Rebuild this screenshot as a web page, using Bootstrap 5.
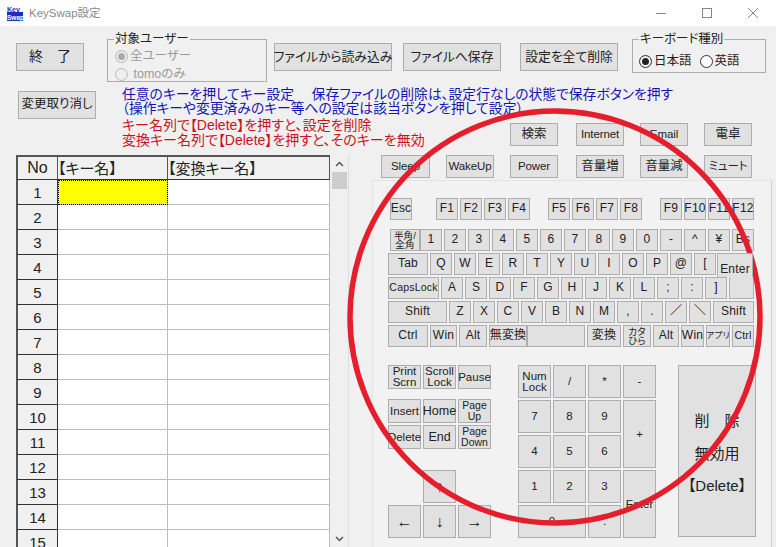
<!DOCTYPE html>
<html lang="ja">
<head>
  <meta charset="UTF-8">
  <title>KeySwap設定</title>
  <link href="https://cdn.jsdelivr.net/npm/bootstrap@5.3.3/dist/css/bootstrap.min.css" rel="stylesheet">
  <style>
    html, body { width: 776px; height: 547px; overflow: hidden; }
    body {
      position: relative;
      background: #f0f0f0;
      color: #222;
      font-family: "Liberation Sans", "Noto Sans CJK JP", sans-serif;
      font-feature-settings: "palt";
      font-size: 13px;
      line-height: 1.1;
    }
    .titlebar { height: 26px; background: #fff; color: #8a8a8a; font-size: 11.5px; }
    .appicon { width: 16px; height: 16px; margin: 0 6px 0 7px; }
    .winbtn { width: 46px; }

    .topbar { height: 60px; padding-top: 17px; }
    .wbtn {
      display: flex; align-items: center; justify-content: center; flex: none;
      padding: 0; border: 1px solid #adadad; border-radius: 0;
      background: #e1e1e1; color: #222; line-height: 1.1; text-align: center;
      font-size: 12.8px; white-space: nowrap; font-feature-settings: "palt";
    }
    .wbtn:hover { background: #e1e1e1; border-color: #adadad; color: #222; }
    .fbtn { height: 28px; }
    .btn-quit { width: 68px; margin-left: 16px; font-size: 14px; }
    .btn-load { width: 118px; margin-left: 7px; }
    .btn-save { width: 98px; margin-left: 11px; }
    .btn-clear { width: 98px; margin-left: 19px; }
    .btn-undo { width: 78px; height: 28px; margin: 5px 0 0 18px; font-size: 12.5px; }

    .groupbox { position: relative; flex: none; border: 1px solid #adadad; font-size: 12.5px; margin-top: -4px; }
    .group-user { width: 160px; height: 43px; margin-left: 23px; padding: 7px 0 0 7px; }
    .group-kb { width: 134px; height: 34px; margin-left: 14px; padding: 12px 0 0 6px; }
    .grouptitle {
      position: absolute; left: 6px; top: -8px; padding: 0 1px;
      background: #f0f0f0; line-height: 15px;
    }
    .radio-line { display: flex; align-items: center; gap: 2px; line-height: 18px; }
    .radio-line .form-check-input {
      width: 13px; height: 13px; margin: 0; flex: none; border-color: #333;
      background-color: #fff; background-image: none; opacity: 1;
    }
    .radio-line .form-check-input:checked {
      background-color: #fff; border-color: #333;
      box-shadow: inset 0 0 0 2px #fff, inset 0 0 0 7px #222;
    }
    .radio-line .form-check-input:disabled { border-color: #bbb; background-color: #eee; }
    .radio-line .form-check-input:disabled:checked { box-shadow: inset 0 0 0 2px #eee, inset 0 0 0 7px #aaa; }
    .dim { color: #9a9a9a; }

    .noticerow { height: 32px; }
    .notice { margin: 2px 0 0 26px; font-size: 13.8px; line-height: 14px; white-space: nowrap; color: #1414b4; }
    .warn { font-size: 14px; line-height: 15px; white-space: nowrap; color: #c8141e; }

    .leftpane { width: 372px; flex: none; }
    .rightpane { width: 404px; flex: none; padding-top: 5px; }
    .warnblock { height: 37px; padding: 0 0 0 122px; }

    .gridwrap { margin-left: 16px; }
    .keygrid { border-collapse: separate; border-spacing: 0; table-layout: fixed; width: 314px; }
    .keygrid th, .keygrid td { height: 25px; padding: 0; font-weight: 400; font-size: 15px; line-height: 1; }
    .keygrid thead th { background: #f0f0f0; border-top: 2px solid #555; border-right: 1px solid #555; border-bottom: 1px solid #333; text-align: left; }
    .keygrid thead th:first-child { border-left: 2px solid #555; text-align: center; padding: 0; font-size: 16px; }
    .keygrid tbody th { background: #f0f0f0; text-align: center; border-left: 2px solid #555; border-right: 1px solid #333; border-bottom: 1px solid #333; }
    .keygrid tbody td { background: #fff; border-right: 1px solid #bdbdbd; border-bottom: 1px solid #bdbdbd; }
    .keygrid tbody td.activecell { background: #ff0; outline: 1px dotted #000; outline-offset: -1px; }
    .colno { width: 42px; }
    .colkey { width: 110px; }
    .gridscroll { width: 18px; margin-left: 1px; height: 392px; position: relative; background: #f0f0f0; border-right: 1px solid #ddd; }
    .scrollthumb { height: 17px; width: 15px; margin: 0 1px; background: #cdcdcd; }
    .scrollarrow { height: 17px; display: flex; align-items: center; justify-content: center; }

    .toprow { height: 23px; gap: 16px; margin-bottom: 9px; padding-left: 138px; }
    .toprow.second { padding-left: 9px; margin-bottom: 2px; }
    .tkey { width: 48px; height: 23px; font-size: 11.5px; letter-spacing: -.1px; }
    .tkey.sleepkey { width: 49px; }
    .tkey.shifted { margin-left: 2px; }
    .kanji { font-size: 12.5px; letter-spacing: 0; }

    .kbpanel { width: 400px; height: 367px; background: #f2f2f2; border-top: 1px solid #e4e4e4; border-left: 1px solid #e4e4e4; border-right: 1px solid #cfcfcf; padding: 17px 0 0 15px; }
    .kbrow { display: flex; gap: 2px; height: 22px; margin-bottom: 2px; }
    .kbrow.fnrow { margin: 0 0 9px 2px; }
    .kbrow.numrow { margin-left: 2px; }
    .kkey { width: 22px; height: 22px; font-size: 12px; letter-spacing: .2px; }
    .small-print { font-size: 9.5px; line-height: 9.5px; }
    .mini { font-size: 8.5px; }
    .tiny { font-size: 10.5px; }
    .gap-fn { margin-left: 22px; }
    .gap-fn2 { margin-left: 16px; }
    .w23 { width: 23px; } .w24 { width: 24px; } .w25 { width: 25px; } .w26 { width: 26px; } .w27 { width: 27px; } .w28 { width: 28px; }
    .w30 { width: 30px; } .w34 { width: 34px; } .w36 { width: 36px; } .w38 { width: 38px; } .w40 { width: 40px; } .w41 { width: 41px; }
    .w51 { width: 51px; } .w58 { width: 58px; } .w59 { width: 59px; }
    .tuck { margin-right: -2px; }
    .enter-top { height: 24px; margin-left: -1px; border-bottom-color: transparent; align-items: flex-end; position: relative; z-index: 1; }
    .enter-bottom { border-top-color: transparent; }

    .lowerblock { padding-top: 16px; gap: 27px; }
    .navgrid { display: grid; grid-template-columns: repeat(3, 33px); grid-auto-rows: 24px; gap: 2px; }
    .navgrid.second { margin-top: 10px; }
    .navgrid.arrows { margin-top: 21px; grid-auto-rows: 33px; }
    .upkey { grid-column: 2; }
    .leftkey { grid-column: 1; }
    .npad { display: grid; grid-template-columns: repeat(4, 33px); grid-auto-rows: 33px; gap: 2px; }
    .npad .wbtn, .navgrid .wbtn { font-size: 11.5px; line-height: 11px; }
    .navgrid .wbtn.keylabel { font-size: 12.5px; }
    .navgrid .wbtn.pagekey { font-size: 10.5px; }
    .navgrid.arrows .wbtn { font-size: 16px; }
    .sp2r { grid-row: span 2; }
    .sp2c { grid-column: span 2; }
    .bigkey { width: 78px; height: 172px; margin-left: -5px; padding-top: 6px; flex-direction: column; font-size: 15px; gap: 16px; }
    .ringoverlay { position: absolute; inset: 0; width: 776px; height: 547px; pointer-events: none; }
  </style>
</head>
<body>

  <div class="titlebar d-flex align-items-center">
    <svg class="appicon" viewBox="0 0 16 16">
      <rect width="16" height="16" fill="#fff"/>
      <rect y="7" width="16" height="9" fill="#1a2fc0"/>
      <text x="0" y="7" font-size="7" fill="#1a2fc0" font-family="Liberation Sans" font-weight="700">Key</text>
      <text x="0" y="15" font-size="6.5" fill="#fff" font-family="Liberation Sans" font-weight="700">Swap</text>
    </svg>
    <span>KeySwap設定</span>
    <div class="ms-auto d-flex">
      <div class="winbtn d-flex justify-content-center">
        <svg width="10" height="10" viewBox="0 0 10 10"><path d="M0 5.5H10" stroke="#888"/></svg>
      </div>
      <div class="winbtn d-flex justify-content-center">
        <svg width="10" height="10" viewBox="0 0 10 10"><rect x=".5" y=".5" width="9" height="9" fill="none" stroke="#888"/></svg>
      </div>
      <div class="winbtn d-flex justify-content-center">
        <svg width="10" height="10" viewBox="0 0 10 10"><path d="M0 0L10 10M10 0L0 10" stroke="#888"/></svg>
      </div>
    </div>
  </div>

  <div class="topbar d-flex align-items-start">
    <button class="btn wbtn fbtn btn-quit">終　了</button>
    <div class="groupbox group-user">
      <span class="grouptitle">対象ユーザー</span>
      <label class="radio-line dim"><input class="form-check-input" type="radio" checked disabled>全ユーザー</label>
      <label class="radio-line dim"><input class="form-check-input" type="radio" disabled>&nbsp;tomoのみ</label>
    </div>
    <button class="btn wbtn fbtn btn-load">ファイルから読み込み</button>
    <button class="btn wbtn fbtn btn-save">ファイルへ保存</button>
    <button class="btn wbtn fbtn btn-clear">設定を全て削除</button>
    <div class="groupbox group-kb">
      <span class="grouptitle">キーボード種別</span>
      <div class="d-flex gap-2">
        <label class="radio-line"><input class="form-check-input" type="radio" checked>日本語</label>
        <label class="radio-line"><input class="form-check-input" type="radio">英語</label>
      </div>
    </div>
  </div>

  <div class="noticerow d-flex">
    <button class="btn wbtn btn-undo">変更取り消し</button>
    <div class="notice">
      任意のキーを押してキー設定　 保存ファイルの削除は、設定行なしの状態で保存ボタンを押す<br>
      （操作キーや変更済みのキー等への設定は該当ボタンを押して設定）
    </div>
  </div>

  <div class="d-flex">
    <div class="leftpane">
      <div class="warnblock warn">
        キー名列で【Delete】を押すと、設定を削除<br>
        変換キー名列で【Delete】を押すと、そのキーを無効
      </div>
      <div class="gridwrap d-flex">
        <table class="keygrid">
          <colgroup><col class="colno"><col class="colkey"><col></colgroup>
          <thead>
            <tr><th>No</th><th>【キー名】</th><th>【変換キー名】</th></tr>
          </thead>
          <tbody>
            <tr><th>1</th><td class="activecell"></td><td></td></tr>
            <tr><th>2</th><td></td><td></td></tr>
            <tr><th>3</th><td></td><td></td></tr>
            <tr><th>4</th><td></td><td></td></tr>
            <tr><th>5</th><td></td><td></td></tr>
            <tr><th>6</th><td></td><td></td></tr>
            <tr><th>7</th><td></td><td></td></tr>
            <tr><th>8</th><td></td><td></td></tr>
            <tr><th>9</th><td></td><td></td></tr>
            <tr><th>10</th><td></td><td></td></tr>
            <tr><th>11</th><td></td><td></td></tr>
            <tr><th>12</th><td></td><td></td></tr>
            <tr><th>13</th><td></td><td></td></tr>
            <tr><th>14</th><td></td><td></td></tr>
            <tr><th>15</th><td></td><td></td></tr>
          </tbody>
        </table>
        <div class="gridscroll d-flex flex-column">
          <div class="scrollarrow"><svg width="9" height="6" viewBox="0 0 9 6"><path d="M1 5L4.5 1.5L8 5" fill="none" stroke="#555" stroke-width="1.5"/></svg></div>
          <div class="scrollthumb"></div>
          <div class="scrollarrow mt-auto"><svg width="9" height="6" viewBox="0 0 9 6"><path d="M1 1L4.5 4.5L8 1" fill="none" stroke="#555" stroke-width="1.5"/></svg></div>
        </div>
      </div>
    </div>

    <div class="rightpane">
      <div class="toprow d-flex">
        <button class="btn wbtn tkey kanji">検索</button>
        <button class="btn wbtn tkey shifted">Internet</button>
        <button class="btn wbtn tkey">Email</button>
        <button class="btn wbtn tkey kanji">電卓</button>
      </div>
      <div class="toprow second d-flex">
        <button class="btn wbtn tkey sleepkey">Sleep</button>
        <button class="btn wbtn tkey">WakeUp</button>
        <button class="btn wbtn tkey">Power</button>
        <button class="btn wbtn tkey kanji shifted">音量増</button>
        <button class="btn wbtn tkey kanji">音量減</button>
        <button class="btn wbtn tkey">ミュート</button>
      </div>

      <div class="kbpanel">
        <div class="kbrow fnrow">
          <button class="btn wbtn kkey">Esc</button>
          <button class="btn wbtn kkey gap-fn">F1</button>
          <button class="btn wbtn kkey">F2</button>
          <button class="btn wbtn kkey">F3</button>
          <button class="btn wbtn kkey">F4</button>
          <button class="btn wbtn kkey gap-fn2">F5</button>
          <button class="btn wbtn kkey">F6</button>
          <button class="btn wbtn kkey">F7</button>
          <button class="btn wbtn kkey">F8</button>
          <button class="btn wbtn kkey gap-fn2">F9</button>
          <button class="btn wbtn kkey">F10</button>
          <button class="btn wbtn kkey">F11</button>
          <button class="btn wbtn kkey">F12</button>
        </div>
        <div class="kbrow numrow">
          <button class="btn wbtn kkey w30 tuck small-print">半角/<br>全角</button>
          <button class="btn wbtn kkey">1</button>
          <button class="btn wbtn kkey">2</button>
          <button class="btn wbtn kkey">3</button>
          <button class="btn wbtn kkey">4</button>
          <button class="btn wbtn kkey">5</button>
          <button class="btn wbtn kkey">6</button>
          <button class="btn wbtn kkey">7</button>
          <button class="btn wbtn kkey">8</button>
          <button class="btn wbtn kkey">9</button>
          <button class="btn wbtn kkey">0</button>
          <button class="btn wbtn kkey">-</button>
          <button class="btn wbtn kkey">^</button>
          <button class="btn wbtn kkey">¥</button>
          <button class="btn wbtn kkey">Bs</button>
        </div>
        <div class="kbrow">
          <button class="btn wbtn kkey w40">Tab</button>
          <button class="btn wbtn kkey">Q</button>
          <button class="btn wbtn kkey">W</button>
          <button class="btn wbtn kkey">E</button>
          <button class="btn wbtn kkey">R</button>
          <button class="btn wbtn kkey">T</button>
          <button class="btn wbtn kkey">Y</button>
          <button class="btn wbtn kkey">U</button>
          <button class="btn wbtn kkey">I</button>
          <button class="btn wbtn kkey">O</button>
          <button class="btn wbtn kkey">P</button>
          <button class="btn wbtn kkey">@</button>
          <button class="btn wbtn kkey">[</button>
          <button class="btn wbtn kkey w36 enter-top">Enter</button>
        </div>
        <div class="kbrow">
          <button class="btn wbtn kkey w51 tiny">CapsLock</button>
          <button class="btn wbtn kkey">A</button>
          <button class="btn wbtn kkey">S</button>
          <button class="btn wbtn kkey">D</button>
          <button class="btn wbtn kkey">F</button>
          <button class="btn wbtn kkey">G</button>
          <button class="btn wbtn kkey">H</button>
          <button class="btn wbtn kkey">J</button>
          <button class="btn wbtn kkey">K</button>
          <button class="btn wbtn kkey">L</button>
          <button class="btn wbtn kkey">;</button>
          <button class="btn wbtn kkey">:</button>
          <button class="btn wbtn kkey">]</button>
          <button class="btn wbtn kkey w25 enter-bottom" aria-label="Enter"></button>
        </div>
        <div class="kbrow">
          <button class="btn wbtn kkey w59">Shift</button>
          <button class="btn wbtn kkey">Z</button>
          <button class="btn wbtn kkey">X</button>
          <button class="btn wbtn kkey">C</button>
          <button class="btn wbtn kkey">V</button>
          <button class="btn wbtn kkey">B</button>
          <button class="btn wbtn kkey">N</button>
          <button class="btn wbtn kkey">M</button>
          <button class="btn wbtn kkey">,</button>
          <button class="btn wbtn kkey">.</button>
          <button class="btn wbtn kkey">／</button>
          <button class="btn wbtn kkey">＼</button>
          <button class="btn wbtn kkey w41">Shift</button>
        </div>
        <div class="kbrow">
          <button class="btn wbtn kkey w40">Ctrl</button>
          <button class="btn wbtn kkey w27">Win</button>
          <button class="btn wbtn kkey w28">Alt</button>
          <button class="btn wbtn kkey w38 tuck">無変換</button>
          <button class="btn wbtn kkey w58"></button>
          <button class="btn wbtn kkey w34">変換</button>
          <button class="btn wbtn kkey w28 small-print">カタ<br>ひら</button>
          <button class="btn wbtn kkey w26">Alt</button>
          <button class="btn wbtn kkey w23">Win</button>
          <button class="btn wbtn kkey w24 mini">アプリ</button>
          <button class="btn wbtn kkey tiny">Ctrl</button>
        </div>

        <div class="lowerblock d-flex">
          <div>
            <div class="navgrid">
              <button class="btn wbtn">Print<br>Scrn</button>
              <button class="btn wbtn">Scroll<br>Lock</button>
              <button class="btn wbtn">Pause</button>
            </div>
            <div class="navgrid second">
              <button class="btn wbtn">Insert</button>
              <button class="btn wbtn keylabel">Home</button>
              <button class="btn wbtn pagekey">Page<br>Up</button>
              <button class="btn wbtn">Delete</button>
              <button class="btn wbtn keylabel">End</button>
              <button class="btn wbtn pagekey">Page<br>Down</button>
            </div>
            <div class="navgrid arrows">
              <button class="btn wbtn upkey">↑</button>
              <button class="btn wbtn leftkey">←</button>
              <button class="btn wbtn">↓</button>
              <button class="btn wbtn">→</button>
            </div>
          </div>
          <div class="npad">
            <button class="btn wbtn">Num<br>Lock</button>
            <button class="btn wbtn">/</button>
            <button class="btn wbtn">*</button>
            <button class="btn wbtn">-</button>
            <button class="btn wbtn">7</button>
            <button class="btn wbtn">8</button>
            <button class="btn wbtn">9</button>
            <button class="btn wbtn sp2r">+</button>
            <button class="btn wbtn">4</button>
            <button class="btn wbtn">5</button>
            <button class="btn wbtn">6</button>
            <button class="btn wbtn">1</button>
            <button class="btn wbtn">2</button>
            <button class="btn wbtn">3</button>
            <button class="btn wbtn sp2r">Enter</button>
            <button class="btn wbtn sp2c">0</button>
            <button class="btn wbtn">.</button>
          </div>
          <button class="btn wbtn bigkey">
            <span>削　除</span>
            <span>無効用</span>
            <span>【Delete】</span>
          </button>
        </div>
      </div>
    </div>
  </div>

  <svg class="ringoverlay" viewBox="0 0 776 547">
    <ellipse cx="555" cy="317" rx="205" ry="206" fill="none" stroke="#e41e2d" stroke-width="5.5"/>
  </svg>

  <script src="https://cdn.jsdelivr.net/npm/bootstrap@5.3.3/dist/js/bootstrap.bundle.min.js"></script>
</body>
</html>
